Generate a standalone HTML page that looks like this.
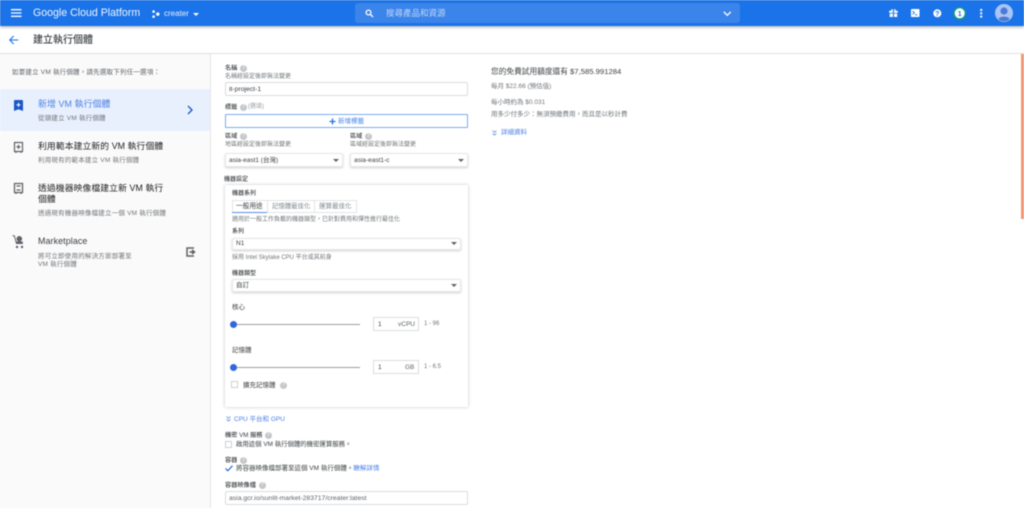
<!DOCTYPE html>
<html lang="zh-Hant"><head><meta charset="utf-8"><title>建立執行個體</title>
<style>
html,body{margin:0;padding:0;width:1024px;height:508px;overflow:hidden;background:#fff}
body{position:relative;font-family:"Liberation Sans","Noto Sans CJK TC",sans-serif;color:#3c4043}
.t{position:absolute;white-space:nowrap;line-height:1.2}
.b{position:absolute;box-sizing:border-box}
.box{position:absolute;box-sizing:border-box;border:1px solid #dadce0;border-radius:2px;background:#fff}
.sel{box-shadow:0 1px 2px rgba(60,64,67,.25);border-color:#e8e8e8}
.arr{position:absolute;width:0;height:0;border-left:3px solid transparent;border-right:3px solid transparent;border-top:3px solid #5f6368}
.q{position:absolute;width:7px;height:7px;border-radius:50%;background:#c4c7ca;color:#fff;font-size:6px;line-height:7px;text-align:center}
.sm{font-size:6px;color:#70757a}
.lb{font-size:6.500px;color:#3c4043;font-weight:500}
svg{position:absolute;overflow:visible}
#w{position:absolute;left:0;top:0;width:1024px;height:508px;filter:blur(.4px)}
</style></head><body><div id="w">

<div class="b" style="left:0;top:0;width:1024px;height:26px;background:#1a73e8;box-shadow:0 1px 3px rgba(60,64,67,.45)"></div>
<svg style="left:11px;top:9px" width="11" height="8"><path d="M0 .7H10.500M0 4H10.500M0 7.300H10.500" stroke="#fff" stroke-width="1.300"/></svg>
<div class="t" style="left:33px;top:7px;font-size:10.600px;color:#f1f5fe">Google Cloud Platform</div>
<svg style="left:152px;top:10px" width="8" height="9" fill="#fff"><circle cx="1.600" cy="1.600" r="1.300"/><circle cx="1.600" cy="6.600" r="1.300"/><circle cx="5.800" cy="4.100" r="1.700"/></svg>
<div class="t" style="left:164px;top:9px;font-size:8px;color:#e8f0fe">creater</div>
<div class="arr" style="left:193px;top:12.500px;border-left-width:3.500px;border-right-width:3.500px;border-top:3.500px solid #fff"></div>
<div class="b" style="left:355px;top:3px;width:385px;height:20px;border-radius:3px;background:#3b84ea"></div>
<svg style="left:365px;top:9px" width="9" height="9" fill="none" stroke="#fff" stroke-width="1.300"><circle cx="3.500" cy="3.500" r="2.400"/><path d="M5.300 5.300L8 8"/></svg>
<div class="t" style="left:386px;top:8px;font-size:8.500px;color:#c4d9f7">搜尋產品和資源</div>
<svg style="left:723px;top:11px" width="9" height="6" fill="none" stroke="#fff" stroke-width="1.300"><path d="M.8 .8L4.300 4.300L7.800 .8"/></svg>

<svg style="left:889px;top:9px" width="9" height="8" fill="#fff"><path d="M.2 1.800H3.900V3.900H.2ZM5 1.800H8.700V3.900H5ZM.7 4.600H3.900V8H.7ZM5 4.600H8.200V8H5Z"/><circle cx="3.100" cy="1" r=".9"/><circle cx="5.800" cy="1" r=".9"/></svg>
<svg style="left:911px;top:9px" width="9" height="8"><rect width="8.500" height="8" rx=".8" fill="#fff"/><path d="M1.500 2L3.400 3.700L1.500 5.400" fill="none" stroke="#1a73e8" stroke-width=".9"/><path d="M4 5.800H6.400" stroke="#1a73e8" stroke-width=".9"/></svg>
<svg style="left:933px;top:9px" width="9" height="9"><circle cx="4.300" cy="4.300" r="4" fill="#fff"/><text x="4.300" y="6.800" font-size="7" font-weight="700" text-anchor="middle" fill="#1a73e8" font-family="Liberation Sans">?</text></svg>
<svg style="left:953px;top:7px" width="14" height="14"><circle cx="6.700" cy="6.300" r="5.700" fill="#fff" stroke="#0f9d77" stroke-width="1.400"/><text x="6.700" y="8.900" font-size="7" font-weight="700" text-anchor="middle" fill="#1a73e8" font-family="Liberation Sans">1</text></svg>
<svg style="left:980px;top:9px" width="3" height="9" fill="#fff"><rect x=".2" y="0" width="2" height="2"/><rect x=".2" y="3.300" width="2" height="2"/><rect x=".2" y="6.600" width="2" height="2"/></svg>
<svg style="left:995px;top:4px" width="18" height="18"><circle cx="9" cy="9" r="9" fill="#a9c5f5"/><circle cx="9" cy="7" r="3.600" fill="#4c79d6"/><path d="M3.500 15C4.500 11.800 13.500 11.800 14.500 15C12.500 18.200 5.500 18.200 3.500 15Z" fill="#4c79d6"/></svg>

<svg style="left:9px;top:35px" width="10" height="10" fill="none" stroke="#1a73e8" stroke-width="1.100"><path d="M9.300 5H.8M4.700 1L.8 5L4.700 9"/></svg>
<div class="t" style="left:33px;top:34.500px;font-size:10px;color:#3c4043;font-weight:500">建立執行個體</div>
<div class="b" style="left:0;top:53px;width:1024px;height:1px;background:#e0e0e0"></div>

<div class="b" style="left:0;top:54px;width:211px;height:454px;background:#fafafa;border-right:1px solid #e6e6e6"></div>
<div class="t" style="left:12px;top:68.500px;font-size:6.500px;color:#5f6368;letter-spacing:.2px">如要建立 VM 執行個體，請先選取下列任一選項：</div>
<div class="b" style="left:0;top:89px;width:210px;height:42px;background:#e8f0fe"></div>
<svg style="left:14px;top:100px" width="9" height="11"><path d="M0 1Q0 0 1 0H8Q9 0 9 1V11L4.500 9.300L0 11Z" fill="#1a56c8"/><path d="M4.500 2.800V7M2.400 4.900H6.600" stroke="#fff" stroke-width="1"/></svg>
<div class="t" style="left:38px;top:99px;font-size:8.900px;color:#4f7fe0;letter-spacing:.1px">新增 VM 執行個體</div>
<div class="t" style="left:38px;top:115px;font-size:6.500px;color:#70757a;letter-spacing:.2px">從頭建立 VM 執行個體</div>
<svg style="left:187px;top:105px" width="7" height="10" fill="none" stroke="#1a56c8" stroke-width="1.300"><path d="M1 1L5 5L1 9"/></svg>

<svg style="left:14px;top:142px" width="9" height="11" fill="none" stroke="#5f6368" stroke-width="1.200"><path d="M.5 .5H8.500V9.500H.5ZM2 9.500V11M7 9.500V11"/><path d="M4.500 2.800V7M2.400 4.900H6.600"/></svg>
<div class="t" style="left:38px;top:141px;font-size:8.800px;color:#202124;letter-spacing:.1px">利用範本建立新的 VM 執行個體</div>
<div class="t" style="left:38px;top:157px;font-size:6.500px;color:#70757a;letter-spacing:.2px">利用現有的範本建立 VM 執行個體</div>

<svg style="left:14px;top:183px" width="9" height="11" fill="none" stroke="#5f6368" stroke-width="1.300"><path d="M.5 .5H8.500V9.500H.5ZM2 9.500V11M7 9.500V11"/><path d="M2.500 3H6.500M2.500 7H6.500"/></svg>
<div class="t" style="left:38px;top:183px;font-size:8.800px;color:#202124;letter-spacing:.1px">透過機器映像檔建立新 VM 執行</div>
<div class="t" style="left:38px;top:194px;font-size:8.800px;color:#202124;letter-spacing:.1px">個體</div>
<div class="t" style="left:38px;top:210px;font-size:6.500px;color:#70757a;letter-spacing:.2px">透過現有機器映像檔建立一個 VM 執行個體</div>

<svg style="left:12px;top:235px" width="13" height="14"><path d="M.5 .8H2.300L4.500 8.500H11" fill="none" stroke="#5f6368" stroke-width="1"/><circle cx="7.300" cy="3.800" r="2.800" fill="#5f6368"/><path d="M3.500 6.500H11L10 9H4.500Z" fill="#5f6368"/><circle cx="5" cy="12" r="1.200" fill="#5f6368"/><circle cx="10" cy="12" r="1.200" fill="#5f6368"/></svg>
<div class="t" style="left:38px;top:236px;font-size:8.900px;color:#3c4043;letter-spacing:.1px">Marketplace</div>
<div class="t" style="left:38px;top:252.500px;font-size:6.500px;color:#70757a;letter-spacing:.2px">將可立即使用的解決方案部署至</div>
<div class="t" style="left:38px;top:261px;font-size:6.500px;color:#70757a;letter-spacing:.2px">VM 執行個體</div>
<svg style="left:186px;top:247px" width="9" height="10" fill="none" stroke="#5f6368" stroke-width="1.500"><path d="M8 1H1V9H8M3.500 5H8.500M6 3L8.500 5L6 7"/></svg>

<div class="t lb" style="left:225px;top:64.500px;font-size:6.200px">名稱</div><div class="q" style="left:240px;top:65px">?</div>
<div class="t sm" style="left:225px;top:73.500px">名稱經設定後即無法變更</div>
<div class="box" style="left:225px;top:82px;width:243px;height:14px"></div>
<div class="t" style="left:229px;top:85.500px;font-size:6.800px;color:#3c4043">it-project-1</div>

<div class="t lb" style="left:225px;top:103.500px;font-size:6.200px">標籤</div><div class="q" style="left:240px;top:104px">?</div>
<div class="t" style="left:248px;top:104px;font-size:6px;color:#9aa0a6">(選填)</div>
<div class="b" style="left:225px;top:114px;width:243px;height:14px;border:1px solid #7baaf0;background:#fff;border-radius:1px"></div>
<svg style="left:329px;top:117.500px" width="7" height="7"><path d="M3.500 .5V6.500M.5 3.500H6.500" stroke="#1a73e8" stroke-width="1.300"/></svg>
<div class="t" style="left:338px;top:118px;font-size:6.500px;color:#4285e8">新增標籤</div>

<div class="t lb" style="left:225px;top:133px;font-size:6.200px">區域</div><div class="q" style="left:240px;top:133px">?</div>
<div class="t sm" style="left:225px;top:141.500px">地區經設定後即無法變更</div>
<div class="box sel" style="left:225px;top:153px;width:118px;height:14px"></div>
<div class="t" style="left:229px;top:157px;font-size:6.500px;color:#3c4043">asia-east1 (台灣)</div>
<div class="arr" style="left:333px;top:159px"></div>
<div class="t lb" style="left:350px;top:133px;font-size:6.200px">區域</div><div class="q" style="left:365px;top:133px">?</div>
<div class="t sm" style="left:350px;top:141.500px">區域經設定後即無法變更</div>
<div class="box sel" style="left:350px;top:153px;width:118px;height:14px"></div>
<div class="t" style="left:354px;top:157px;font-size:6.500px;color:#3c4043">asia-east1-c</div>
<div class="arr" style="left:458px;top:159px"></div>

<div class="t lb" style="left:224px;top:176.500px;font-size:6px">機器設定</div>
<div class="b" style="left:225px;top:185px;width:243px;height:222px;background:#fff;box-shadow:0 0 3px rgba(60,64,67,.3);border-radius:1px"></div>
<div class="t lb" style="left:232px;top:191px;font-size:6px">機器系列</div>
<div class="b" style="left:232px;top:200px;width:125px;height:13px;border:1px solid #e3e3e3;background:#fff"></div>
<div class="b" style="left:267px;top:200px;width:1px;height:13px;background:#e3e3e3"></div>
<div class="b" style="left:314px;top:200px;width:1px;height:13px;background:#e3e3e3"></div>
<div class="b" style="left:232px;top:211.500px;width:35px;height:1.500px;background:#5b8ee6"></div>
<div class="t" style="left:236px;top:203px;font-size:6.700px;color:#3c4043">一般用途</div>
<div class="t" style="left:272px;top:203px;font-size:6.400px;color:#80868b">記憶體最佳化</div>
<div class="t" style="left:319px;top:203px;font-size:6.500px;color:#80868b">運算最佳化</div>
<div class="t sm" style="left:232px;top:216.500px">適用於一般工作負載的機器類型，已針對費用和彈性進行最佳化</div>
<div class="t lb" style="left:232px;top:228.500px;font-size:6px">系列</div>
<div class="box sel" style="left:232px;top:238px;width:229px;height:12px"></div>
<div class="t" style="left:236px;top:240px;font-size:6.500px;color:#3c4043">N1</div>
<div class="arr" style="left:451px;top:242px"></div>
<div class="t sm" style="left:232px;top:254.500px">採用 Intel Skylake CPU 平台或其前身</div>
<div class="t lb" style="left:232px;top:270.500px;font-size:6px">機器類型</div>
<div class="box sel" style="left:232px;top:279px;width:229px;height:13px"></div>
<div class="t" style="left:236px;top:282px;font-size:6.500px;color:#3c4043">自訂</div>
<div class="arr" style="left:451px;top:284px"></div>

<div class="t" style="left:232px;top:304px;font-size:6.500px;color:#3c4043">核心</div>
<div class="b" style="left:233px;top:323.500px;width:127px;height:1px;background:#9e9e9e"></div>
<div class="b" style="left:229.500px;top:320.500px;width:7px;height:7px;border-radius:50%;background:#2f68d8"></div>
<div class="b" style="left:373px;top:317px;width:46px;height:14px;border:1px solid #dadce0;background:#fff"></div>
<div class="t" style="left:378px;top:321px;font-size:6.500px;color:#3c4043">1</div>
<div class="t" style="left:398px;top:321px;font-size:6.500px;color:#5f6368">vCPU</div>
<div class="t" style="left:424px;top:321px;font-size:6px;color:#70757a">1 - 96</div>

<div class="t" style="left:232px;top:347px;font-size:6.500px;color:#3c4043">記憶體</div>
<div class="b" style="left:233px;top:366.500px;width:127px;height:1px;background:#9e9e9e"></div>
<div class="b" style="left:229.500px;top:363.500px;width:7px;height:7px;border-radius:50%;background:#2f68d8"></div>
<div class="b" style="left:373px;top:360px;width:46px;height:14px;border:1px solid #dadce0;background:#fff"></div>
<div class="t" style="left:378px;top:364px;font-size:6.500px;color:#3c4043">1</div>
<div class="t" style="left:405px;top:364px;font-size:6.500px;color:#5f6368">GB</div>
<div class="t" style="left:424px;top:364px;font-size:6px;color:#70757a">1 - 6.5</div>
<div class="b" style="left:231px;top:381px;width:7px;height:7px;border:1px solid #d0d0d0;background:#fff"></div>
<div class="t" style="left:243px;top:382px;font-size:6.500px;color:#3c4043">擴充記憶體</div><div class="q" style="left:280px;top:381.500px">?</div>

<svg style="left:226px;top:416px" width="5" height="6" fill="none" stroke="#5b8ee6" stroke-width=".8"><path d="M.5 .5L2.500 2.300L4.500 .5M.5 3.300L2.500 5.100L4.500 3.300"/></svg>
<div class="t" style="left:234px;top:416px;font-size:6.500px;color:#4a80e4">CPU 平台和 GPU</div>

<div class="t lb" style="left:225px;top:432px;font-size:6.200px">機密 VM 服務</div><div class="q" style="left:264.500px;top:431.500px">?</div>
<div class="b" style="left:225px;top:441px;width:7px;height:7px;border:1px solid #d0d0d0;background:#fff"></div>
<div class="t" style="left:236px;top:440.500px;font-size:6.400px;color:#3c4043">啟用這個 VM 執行個體的機密運算服務。</div>
<div class="t lb" style="left:225px;top:457px;font-size:6.200px">容器</div><div class="q" style="left:240px;top:456.500px">?</div>
<svg style="left:225px;top:465px" width="8" height="7" fill="none" stroke="#2f68d8" stroke-width="1.200"><path d="M.5 3.500L2.800 5.800L7.500 .7"/></svg>
<div class="t" style="left:236px;top:465px;font-size:6.500px;color:#3c4043">將容器映像檔部署至這個 VM 執行個體。<span style="color:#4a80e4">瞭解詳情</span></div>
<div class="t lb" style="left:225px;top:482px;font-size:6.200px">容器映像檔</div><div class="q" style="left:258.500px;top:481.500px">?</div>
<div class="box" style="left:225px;top:491px;width:243px;height:14px"></div>
<div class="t" style="left:229px;top:495px;font-size:6.800px;color:#5f6368">asia.gcr.io/sunlit-market-283717/creater:latest</div>

<div class="t" style="left:491px;top:66.500px;font-size:7.700px;color:#3c4043">您的免費試用額度還有 $7,585.991284</div>
<div class="t" style="left:491px;top:83px;font-size:6.500px;color:#70757a">每月 $22.66 (預估值)</div>
<div class="t" style="left:491px;top:98.500px;font-size:6.500px;color:#70757a">每小時約為 $0.031</div>
<div class="t" style="left:491px;top:111px;font-size:6.500px;color:#70757a">用多少付多少：無須預繳費用，而且是以秒計費</div>
<svg style="left:492px;top:129.500px" width="5" height="6" fill="none" stroke="#5b8ee6" stroke-width=".8"><path d="M.5 .5L2.500 2.300L4.500 .5M.5 3.300L2.500 5.100L4.500 3.300"/></svg>
<div class="t" style="left:501px;top:129px;font-size:6.500px;color:#4a80e4">詳細資料</div>

<div class="b" style="left:1021px;top:54px;width:3px;height:165px;background:#f59571"></div>
</div></body></html>
